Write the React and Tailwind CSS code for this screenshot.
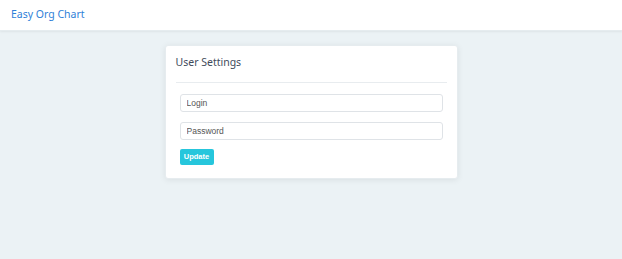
export default function App() {
    return (
        <div className="min-h-screen bg-[#ebf2f5] font-['Noto_Sans',sans-serif]">
            {/* Header */}
            <header className="h-[31px] bg-white flex items-center px-[11px] shadow-[0_1px_2px_rgba(0,0,0,0.06)] border-b border-[#e5ecef]">
                <span className="text-[10.5px] text-[#2f7fd8]">Easy Org Chart</span>
            </header>

            {/* Card */}
            <div className="flex justify-center pt-[14px]">
                <div className="w-[293px] bg-white rounded-[3px] shadow-[0_1px_6px_rgba(0,0,0,0.08)] border border-[#e6ecef] px-[10px] pt-[9px] pb-[13px]">
                    <h1 className="text-[10.5px] text-[#3f4b5b] leading-[14px]">User Settings</h1>
                    <div className="mt-[13px] border-t border-[#e8ecef]" />
                    <div className="px-[4px] mt-[11px] flex flex-col gap-[10px] font-['Liberation_Sans',sans-serif]">
                        <input
                            placeholder="Login"
                            className="block h-[18px] w-full border border-[#dfe3e7] rounded-[3px] px-[6px] text-[8.5px] placeholder:text-[#555] outline-none"
                        />
                        <input
                            placeholder="Password"
                            className="block h-[18px] w-full border border-[#dfe3e7] rounded-[3px] px-[6px] text-[8.5px] placeholder:text-[#555] outline-none"
                        />
                        <button className="block -mt-[1px] h-[16px] w-[34px] rounded-[2px] bg-[#26c6dc] text-white text-[7.5px] font-bold leading-none">
                            Update
                        </button>
                    </div>
                </div>
            </div>
        </div>
    );
}
